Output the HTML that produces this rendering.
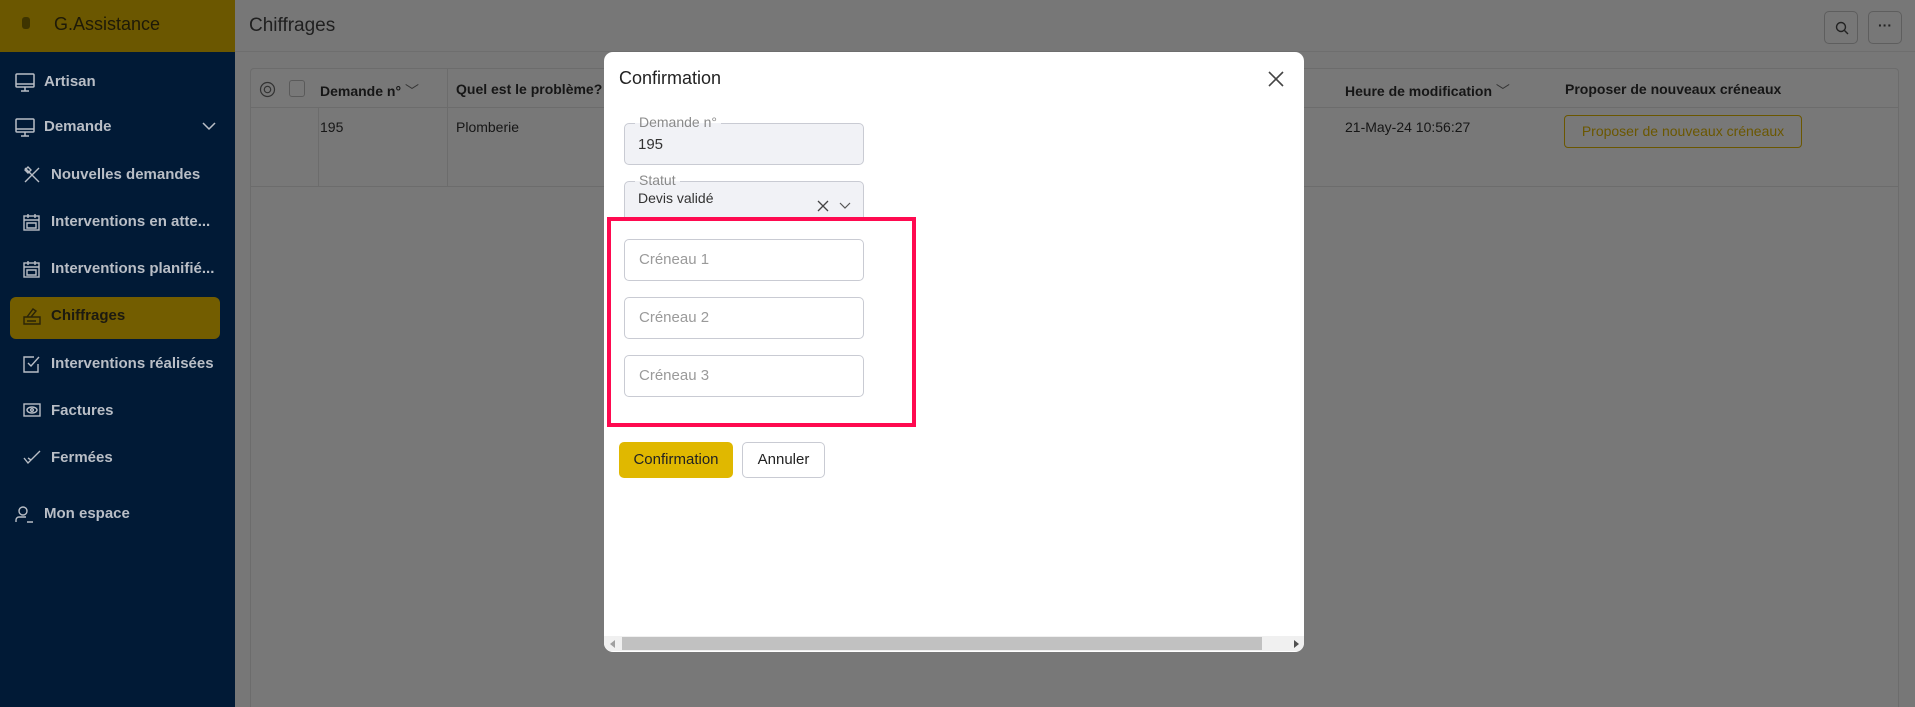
<!DOCTYPE html>
<html style="background:#777"><head><meta charset="utf-8"><style>
*{box-sizing:border-box;margin:0;padding:0}
html,body{width:1915px;height:707px;overflow:hidden}
body{font-family:"Liberation Sans",sans-serif;background:#777;position:relative}
.sb{position:absolute;left:0;top:0;width:235px;height:707px;background:#011a36}
.sbh{position:absolute;left:0;top:0;width:235px;height:52px;background:#6b5700;color:#1e1a08;font-size:18px;padding:14px 0 0 54px}
.sbh i{position:absolute;left:22px;top:17px;width:8px;height:12px;background:#3e3400;border-radius:3px}
.it{position:absolute;left:0;width:235px;color:#b9bec6;font-size:15px;font-weight:bold;height:20px;line-height:20px}
.it svg{position:absolute;top:1px}
.act{position:absolute;left:10px;top:297px;width:210px;height:42px;background:#735d00;border-radius:6px}
.top{position:absolute;left:235px;top:0;right:0;height:52px;border-bottom:1px solid #6e6e6e;background:#777}
.ttl{position:absolute;left:249px;top:15px;font-size:19px;color:#1f1f1f}
.ib{position:absolute;top:11px;width:34px;height:33px;border:1px solid #5e5e5e;border-radius:5px}
.panel{position:absolute;left:250px;top:68px;width:1649px;height:639px;border:1px solid #6c6c6c;border-bottom:none;border-radius:4px 4px 0 0;background:#787878}
.hr{position:absolute;left:0;right:0;top:38px;border-top:1px solid #6c6c6c}
.hr2{position:absolute;left:0;right:0;top:117px;border-top:1px solid #6c6c6c}
.th{position:absolute;top:12px;font-size:14px;font-weight:bold;color:#161616}
.td{position:absolute;top:50px;font-size:14px;color:#161616}
.modal{position:absolute;left:604px;top:52px;width:700px;height:600px;background:#fff;border-radius:9px;overflow:hidden}
.mt{position:absolute;left:15px;top:16px;font-size:18px;color:#222}
.fld{position:absolute;left:20px;width:240px;height:42px;border:1px solid #c9cbd3;border-radius:5px}
.lbl{position:absolute;left:10px;top:-11px;background:#fff;padding:0 4px;font-size:14px;color:#8a8a8a;line-height:18px}
.val{position:absolute;left:13px;font-size:15px;color:#333}
.ph{position:absolute;left:14px;top:11px;font-size:15px;color:#9a9a9a}
.red{position:absolute;left:3px;top:165px;width:309px;height:210px;border:4px solid #ff0a50}
.btn{position:absolute;top:390px;height:36px;border-radius:5px;font-size:15px;line-height:34px;text-align:center;color:#222}
.sbar{position:absolute;left:0;right:0;top:584px;height:15px;background:#f0f0f0}
</style></head><body>
<div class="sb">
<div class="sbh"><i></i>G.Assistance</div>
<div class="act"></div>
<div class="it" style="top:72px;padding-left:44px"><svg style="left:15px" width="20" height="19" viewBox="0 0 20 19" fill="none" stroke="#b9bec6" stroke-width="1.5"><rect x="1" y="1" width="18" height="13" rx="1"/><path d="M1 11h18M6 18h8M10 14v4"/></svg>Artisan</div>
<div class="it" style="top:117px;padding-left:44px"><svg style="left:15px" width="20" height="19" viewBox="0 0 20 19" fill="none" stroke="#b9bec6" stroke-width="1.5"><rect x="1" y="1" width="18" height="13" rx="1"/><path d="M1 11h18M6 18h8M10 14v4"/></svg>Demande<svg style="left:202px;top:5px" width="14" height="9" viewBox="0 0 14 9" fill="none" stroke="#b9bec6" stroke-width="1.5"><path d="M1 1l6 6 6-6"/></svg></div>
<div class="it" style="top:165px;padding-left:51px"><svg style="left:23px" width="18" height="18" viewBox="0 0 18 18" fill="none" stroke="#b9bec6" stroke-width="1.4"><path d="M2 2l14 14M16 2L2 16M5 1l3 3-3 3-3-3z"/></svg>Nouvelles demandes</div>
<div class="it" style="top:212px;padding-left:51px"><svg style="left:23px" width="17" height="18" viewBox="0 0 17 18" fill="none" stroke="#b9bec6" stroke-width="1.4"><rect x="1" y="3" width="15" height="14"/><path d="M1 7h15M5 1v4M12 1v4M4 10h9v5H4z"/></svg>Interventions en atte...</div>
<div class="it" style="top:259px;padding-left:51px"><svg style="left:23px" width="17" height="18" viewBox="0 0 17 18" fill="none" stroke="#b9bec6" stroke-width="1.4"><rect x="1" y="3" width="15" height="14"/><path d="M1 7h15M5 1v4M12 1v4M4 10h9v5H4z"/></svg>Interventions planifié...</div>
<div class="it" style="top:306px;padding-left:51px;color:#1c1a10"><svg style="left:23px" width="18" height="18" viewBox="0 0 18 18" fill="none" stroke="#2a2408" stroke-width="1.4"><path d="M1 10h16v7H1zM4 10l6-8 3 2-5 6M4 14h9"/></svg>Chiffrages</div>
<div class="it" style="top:354px;padding-left:51px"><svg style="left:23px" width="18" height="18" viewBox="0 0 18 18" fill="none" stroke="#b9bec6" stroke-width="1.4"><path d="M15 9v8H1V2h10M5 8l3 3 8-9"/></svg>Interventions réalisées</div>
<div class="it" style="top:401px;padding-left:51px"><svg style="left:23px" width="18" height="16" viewBox="0 0 18 16" fill="none" stroke="#b9bec6" stroke-width="1.4"><rect x="1" y="2" width="16" height="12"/><ellipse cx="9" cy="8" rx="5" ry="3"/><circle cx="9" cy="8" r="1.3"/></svg>Factures</div>
<div class="it" style="top:448px;padding-left:51px"><svg style="left:23px" width="18" height="16" viewBox="0 0 18 16" fill="none" stroke="#b9bec6" stroke-width="1.4"><path d="M1 9l4 5L17 2M5 9l3 2"/></svg>Fermées</div>
<div class="it" style="top:504px;padding-left:44px"><svg style="left:15px" width="19" height="18" viewBox="0 0 19 18" fill="none" stroke="#b9bec6" stroke-width="1.4"><circle cx="8" cy="6" r="4"/><path d="M1 17v-2a3 3 0 013-3h7M12 17h6"/></svg>Mon espace</div>
</div>
<div class="top"></div>
<div class="ttl">Chiffrages</div>
<div class="ib" style="left:1824px"><svg style="position:absolute;left:10px;top:9px" width="14" height="14" viewBox="0 0 14 14" fill="none" stroke="#222" stroke-width="1.4"><circle cx="6" cy="6" r="4.5"/><path d="M9.5 9.5L13 13"/></svg></div>
<div class="ib" style="left:1868px;font-size:14px;text-align:center;line-height:26px;color:#222;font-weight:bold">···</div>
<div class="panel">
<div class="hr"></div><div class="hr2"></div>
<div style="position:absolute;left:67px;top:38px;height:79px;border-left:1px solid #6c6c6c"></div>
<div style="position:absolute;left:196px;top:0;height:117px;border-left:1px solid #6c6c6c"></div>
<svg style="position:absolute;left:8px;top:12px" width="17" height="17" viewBox="0 0 17 17" fill="none" stroke="#333" stroke-width="1.2"><circle cx="8.5" cy="8.5" r="7"/><circle cx="8.5" cy="8.5" r="3.2"/></svg>
<div style="position:absolute;left:38px;top:11px;width:16px;height:17px;border:1px solid #5a5a5a;border-radius:3px"></div>
<div class="th" style="left:69px">Demande n° <span style="font-weight:normal;color:#333">﹀</span></div>
<div class="th" style="left:205px">Quel est le problème?</div>
<div class="th" style="left:1094px">Heure de modification <span style="font-weight:normal;color:#333">﹀</span></div>
<div class="th" style="left:1314px">Proposer de nouveaux créneaux</div>
<div class="td" style="left:69px">195</div>
<div class="td" style="left:205px">Plomberie</div>
<div class="td" style="left:1094px">21-May-24 10:56:27</div>
<div style="position:absolute;left:1313px;top:46px;width:238px;height:33px;border:1px solid #6b5700;border-radius:4px;color:#6b5700;font-size:14px;text-align:center;line-height:31px">Proposer de nouveaux créneaux</div>
</div>
<div class="modal">
<div class="mt">Confirmation</div>
<svg style="position:absolute;left:664px;top:19px" width="16" height="16" viewBox="0 0 16 16" stroke="#444" stroke-width="1.6"><path d="M1 1l14 14M15 1L1 15"/></svg>
<div class="fld" style="top:71px;background:#f1f2f6"><div class="lbl" style="background:linear-gradient(#fff 55%,#f1f2f6 55%)">Demande n°</div><div class="val" style="top:12px">195</div></div>
<div class="fld" style="top:129px;height:60px;background:#f1f2f6"><div class="lbl" style="background:linear-gradient(#fff 55%,#f1f2f6 55%)">Statut</div><div class="val" style="top:8px;font-size:14px">Devis validé</div>
<svg style="position:absolute;left:192px;top:18px" width="12" height="12" viewBox="0 0 12 12" stroke="#444" stroke-width="1.3"><path d="M1 1l10 10M11 1L1 11"/></svg>
<svg style="position:absolute;left:214px;top:20px" width="12" height="8" viewBox="0 0 12 8" fill="none" stroke="#555" stroke-width="1.2"><path d="M1 1l5 5 5-5"/></svg></div>
<div class="red" style="background:#fff"></div>
<div class="fld" style="top:187px"><div class="ph">Créneau 1</div></div>
<div class="fld" style="top:245px"><div class="ph">Créneau 2</div></div>
<div class="fld" style="top:303px"><div class="ph">Créneau 3</div></div>
<div class="btn" style="left:15px;width:114px;background:#e0b800;border:1px solid #e0b800">Confirmation</div>
<div class="btn" style="left:138px;width:83px;border:1px solid #c9cbd3;background:#fff">Annuler</div>
<div class="sbar"><div style="position:absolute;left:18px;top:1px;width:640px;height:13px;background:#c1c1c1"></div>
<div style="position:absolute;left:6px;top:4px;border-right:5px solid #a0a0a0;border-top:4px solid transparent;border-bottom:4px solid transparent"></div>
<div style="position:absolute;left:690px;top:4px;border-left:5px solid #505050;border-top:4px solid transparent;border-bottom:4px solid transparent"></div></div>
</div>
</body></html>
